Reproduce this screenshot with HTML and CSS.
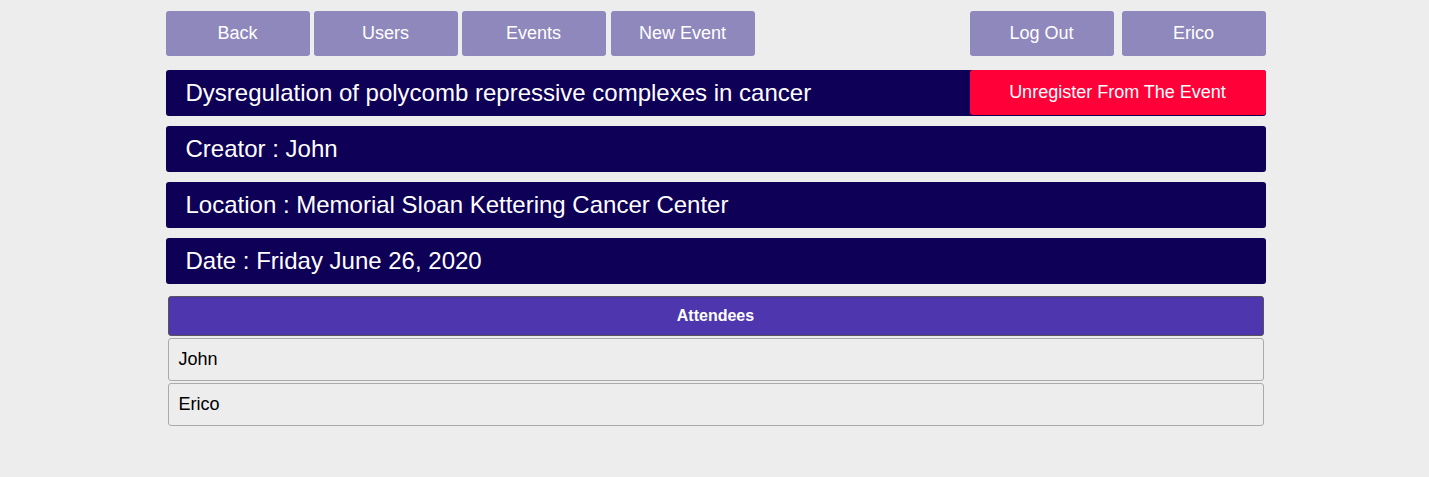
FILE: index.html
```html
<!DOCTYPE html>
<html>
<head>
<meta charset="utf-8">
<link rel="stylesheet" href="styles.css">
</head>
<body>
<div class="page">
  <nav class="nav">
    <div class="nav-left">
      <button class="nav-btn">Back</button>
      <button class="nav-btn">Users</button>
      <button class="nav-btn">Events</button>
      <button class="nav-btn">New Event</button>
    </div>
    <div class="nav-right">
      <button class="nav-btn">Log Out</button>
      <button class="nav-btn">Erico</button>
    </div>
  </nav>
  <div class="bar title-bar">
    <span class="bar-text">Dysregulation of polycomb repressive complexes in cancer</span>
    <button class="unregister">Unregister From The Event</button>
  </div>
  <div class="bar"><span class="bar-text">Creator : John</span></div>
  <div class="bar"><span class="bar-text">Location : Memorial Sloan Kettering Cancer Center</span></div>
  <div class="bar"><span class="bar-text">Date : Friday June 26, 2020</span></div>
  <div class="attendees">
    <div class="att-head">Attendees</div>
    <div class="att-row">John</div>
    <div class="att-row">Erico</div>
  </div>
</div>
</body>
</html>
```
FILE: styles.css
```css
html, body {
  margin: 0;
  padding: 0;
  background: #ededed;
  font-family: "Liberation Sans", Arial, Helvetica, sans-serif;
}
.page {
  width: 1100px;
  margin: 0 auto;
  padding-top: 11px;
  box-sizing: border-box;
  transform: translateX(1px);
}
.nav {
  display: flex;
  justify-content: space-between;
  height: 45px;
}
.nav-left {
  display: flex;
  gap: 4px;
}
.nav-right {
  display: flex;
  gap: 8px;
}
.nav-btn {
  width: 144px;
  height: 45px;
  border: none;
  border-radius: 3px;
  background: #8f88bc;
  color: #fff;
  font-family: inherit;
  font-size: 18px;
  padding: 0;
  margin: 0;
}
.nav-btn:last-child {
  margin-left: 1px;
}
.nav-right .nav-btn:last-child {
  margin-left: 0;
}
.bar {
  display: flex;
  align-items: center;
  justify-content: space-between;
  height: 46px;
  margin-top: 10px;
  background: #0f0057;
  border-radius: 3px;
  color: #fff;
}
.title-bar {
  margin-top: 14px;
}
.bar-text {
  font-size: 24px;
  padding-left: 20px;
}
.unregister {
  align-self: flex-start;
  width: 296px;
  height: 45px;
  border: none;
  border-radius: 3px;
  background: #ff0039;
  color: #fff;
  font-family: inherit;
  font-size: 18px;
  padding: 0;
  margin: 0;
}
.attendees {
  margin: 12px 2px 0;
  display: flex;
  flex-direction: column;
  gap: 2px;
}
.att-head {
  height: 40px;
  box-sizing: border-box;
  background: #4e37ae;
  border: 1px solid #555;
  border-radius: 3px;
  color: #fff;
  font-weight: bold;
  font-size: 16px;
  display: flex;
  align-items: center;
  justify-content: center;
}
.att-row {
  height: 43px;
  box-sizing: border-box;
  border: 1px solid #aaa;
  border-radius: 3px;
  font-size: 18px;
  color: #000;
  display: flex;
  align-items: center;
  padding-left: 10px;
}
```
